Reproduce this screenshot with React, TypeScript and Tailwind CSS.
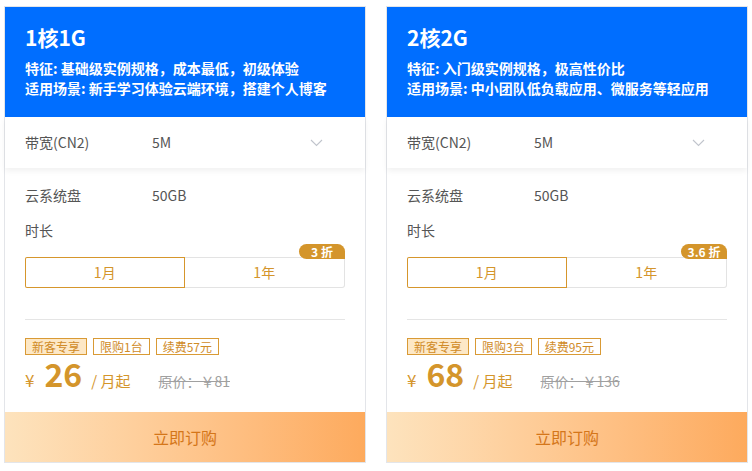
import React from 'react';

interface Plan {
  title: string;
  feature: string;
  scene: string;
  limit: string;
  renew: string;
  price: string;
  original: string;
  discount: string;
}

const plans: Plan[] = [
  {
    title: '1核1G',
    feature: '特征: 基础级实例规格，成本最低，初级体验',
    scene: '适用场景: 新手学习体验云端环境，搭建个人博客',
    limit: '限购1台',
    renew: '续费57元',
    price: '26',
    original: '原价：￥81',
    discount: '3 折',
  },
  {
    title: '2核2G',
    feature: '特征: 入门级实例规格，极高性价比',
    scene: '适用场景: 中小团队低负载应用、微服务等轻应用',
    limit: '限购3台',
    renew: '续费95元',
    price: '68',
    original: '原价：￥136',
    discount: '3.6 折',
  },
];

function Chevron() {
  return (
    <svg width="13" height="8" viewBox="0 0 13 8" fill="none" className="mr-[22px]">
      <path d="M1 1l5.5 5.5L12 1" stroke="#c0c4cc" strokeWidth="1.1" />
    </svg>
  );
}

function PlanCard({ plan }: { plan: Plan }) {
  return (
    <div className="flex w-[362px] flex-col border border-[#e3e5e9] bg-white">
      <div className="bg-[#006eff] px-5 pb-[19px] pt-[16px] text-white">
        <div className="text-[21px] font-bold leading-[28px]">{plan.title}</div>
        <div className="mt-[7px] text-[14px] font-semibold leading-[20px]">{plan.feature}</div>
        <div className="text-[14px] font-semibold leading-[20px]">{plan.scene}</div>
      </div>

      <div className="flex h-[51px] items-center px-5 text-[14px] text-[#555] shadow-[0_3px_6px_rgba(0,0,0,0.06)]">
        <span className="w-[127px]">带宽(CN2)</span>
        <span className="flex-1">5M</span>
        <Chevron />
      </div>

      <div className="px-5">
        <div className="mt-[17px] flex text-[14px] leading-[20px] text-[#555]">
          <span className="w-[127px]">云系统盘</span>
          <span>50GB</span>
        </div>
        <div className="mt-[15px] text-[14px] leading-[20px] text-[#555]">时长</div>

        <div className="relative mt-[17px] flex h-[31px] text-[14px] text-[#d4952b]">
          <div className="flex flex-1 items-center justify-center rounded-l-[2px] ring-1 ring-inset ring-[#d6962c]">1月</div>
          <div className="flex flex-1 items-center justify-center rounded-r-[3px] border border-l-0 border-[#e3e3e3]">1年</div>
          <div className="absolute right-0 top-[-13px] flex h-[15px] w-[46px] items-center justify-center rounded-t-[8px] rounded-bl-[8px] bg-[#d4952b] text-[12px] font-semibold leading-none text-white">
            {plan.discount}
          </div>
        </div>

        <div className="mt-[31px] h-px bg-[#e5e5e5]" />

        <div className="mt-[18px] flex gap-[6px] text-[12px] leading-[15px] text-[#d08b27]">
          <span className="border border-[#d99a35] bg-[#fde8c6] px-[6px]">新客专享</span>
          <span className="border border-[#d99a35] px-[6px]">{plan.limit}</span>
          <span className="border border-[#d99a35] px-[6px]">{plan.renew}</span>
        </div>

        <div className="mt-[3px] flex h-[30px] items-baseline text-[#d4952b]">
          <span className="text-[17px]">¥</span>
          <span className="ml-[10px] text-[32px] font-bold leading-[30px]">{plan.price}</span>
          <span className="ml-[9px] text-[15px]">/ 月起</span>
          <span className="ml-[28px] text-[14px] text-[#a0a0a0] line-through">{plan.original}</span>
        </div>
      </div>

      <button className="mt-[24px] flex h-[50px] items-center justify-center bg-gradient-to-r from-[#fde3bd] to-[#fdaa5d] text-[16px] text-[#d4761a]">
        立即订购
      </button>
    </div>
  );
}

export default function App() {
  return (
    <div
      className="flex h-[471px] w-[752px] items-start gap-[20px] bg-white pl-[4px] pt-[6px]"
      style={{ fontFamily: '"Noto Sans CJK SC", "Noto Sans", sans-serif' }}
    >
      {plans.map((p) => (
        <PlanCard key={p.title} plan={p} />
      ))}
    </div>
  );
}
